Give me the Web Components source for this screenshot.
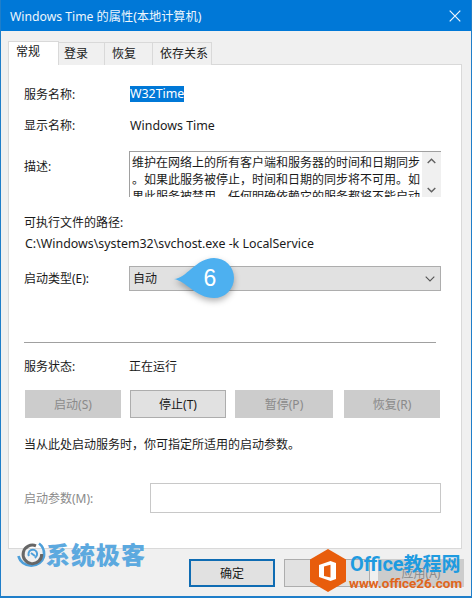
<!DOCTYPE html>
<html lang="zh">
<head>
<meta charset="utf-8">
<title>Windows Time 的属性</title>
<style>
  html, body { margin: 0; padding: 0; background: #f0f0f0; }
  body { font-family: "Noto Sans", "Noto Sans CJK SC", sans-serif; font-size: 12px; color: #1a1a1a; }
</style>
</head>
<body>
<win-dialog>
  <span slot="title">Windows Time 的属性(本地计算机)</span>
  <tab-strip slot="tabs"></tab-strip>
  <service-panel></service-panel>
  <dialog-footer slot="footer"></dialog-footer>
</win-dialog>

<script>
(function (customElements) {
  const FONT = '"Noto Sans", "Noto Sans CJK SC", sans-serif';
  const BRAND = 'Roboto, "Noto Sans CJK SC", sans-serif';

  class WinDialog extends HTMLElement {
    connectedCallback() {
      this.attachShadow({ mode: 'open' }).innerHTML = `
        <style>
          :host { display: flex; flex-direction: column; position: relative; width: 472px; height: 598px;
            box-sizing: border-box; background: #f0f0f0; border: solid #1f7ec9; border-width: 0 1px 2px 1px; overflow: hidden; }
          .bar { display: flex; align-items: center; justify-content: space-between; height: 31px; margin: 0 -1px; padding: 0 11px 0 10px;
            background: #0078d7; color: #eef6fc; font-size: 12.2px; flex: none; }
          svg { display: block; }
          .body { flex: 1; display: flex; flex-direction: column; padding: 10px 9px 0 7px; }
        </style>
        <div class="bar"><slot name="title"></slot>
          <svg width="12" height="12" viewBox="0 0 12 12"><path d="M.7.7l10.6 10.6M11.3.7L.7 11.3" stroke="#eef6fc" stroke-width="1.2" fill="none"/></svg>
        </div>
        <div class="body">
          <slot name="tabs"></slot>
          <slot></slot>
          <slot name="footer"></slot>
        </div>`;
    }
  }

  class TabStrip extends HTMLElement {
    connectedCallback() {
      const tabs = [['常规', 51, 7, true], ['登录', 46, 5], ['恢复', 48, 7], ['依存关系', 59, 7]];
      this.attachShadow({ mode: 'open' }).innerHTML = `
        <style>
          :host { display: flex; align-items: flex-end; height: 24px; position: relative; z-index: 1; margin-bottom: -1px; }
          div { box-sizing: border-box; height: 23px; line-height: 22px; background: #f0f0f0;
            border: 1px solid #d9d9d9; border-width: 1px 1px 0 0; font-size: 12px; color: #1a1a1a; }
          .on { height: 24px; line-height: 20px; background: #fff; border-left-width: 1px; }
        </style>
        ${tabs.map(([t, w, p, on]) => `<div class="${on ? 'on' : ''}" style="width:${w}px;padding-left:${p}px">${t}</div>`).join('')}`;
    }
  }

  class PropRow extends HTMLElement {
    connectedCallback() {
      this.attachShadow({ mode: 'open' }).innerHTML = `
        <style>
          :host { display: flex; align-items: center; min-height: 20px; line-height: 20px; }
          .l { flex: none; box-sizing: border-box; height: 20px; padding-top: var(--label-pad, 1px); width: var(--label-w, 105px); }
          .v { flex: 1; min-width: 0; }
        </style>
        <div class="l"><slot name="label"></slot></div>
        <div class="v"><slot></slot></div>`;
    }
  }

  class DescBox extends HTMLElement {
    connectedCallback() {
      this.attachShadow({ mode: 'open' }).innerHTML = `
        <style>
          :host { display: flex; height: 46px; box-sizing: border-box; border: solid #a0a0a0; border-width: 1px 0 0 1px; overflow: hidden; background: #fff; }
          .t { flex: 1; padding: 2px 0 0 2px; line-height: 17px; white-space: nowrap; overflow: hidden; }
          .s { flex: none; width: 19px; background: #f0f0f0; display: flex; flex-direction: column; justify-content: space-between; align-items: center; padding: 6px 0 4px; box-sizing: border-box; }
        </style>
        <div class="t"><slot></slot></div>
        <div class="s">
          <svg width="9" height="6" viewBox="0 0 9 6"><path d="M.7 5L4.500 1.200 8.300 5" stroke="#606060" stroke-width="1.4" fill="none"/></svg>
          <svg width="9" height="6" viewBox="0 0 9 6"><path d="M.7 1L4.500 4.800 8.300 1" stroke="#606060" stroke-width="1.4" fill="none"/></svg>
        </div>`;
    }
  }

  class WinSelect extends HTMLElement {
    connectedCallback() {
      this.attachShadow({ mode: 'open' }).innerHTML = `
        <style>
          :host { display: flex; align-items: center; justify-content: space-between; height: 25px; box-sizing: border-box; padding: 0 5px 0 3px;
            background: #e1e1e1; border: 1px solid #adadad; }
        </style>
        <span><slot></slot></span>
        <svg width="10" height="6" viewBox="0 0 10 6"><path d="M.7.7L5 5 9.300.7" stroke="#555" stroke-width="1.1" fill="none"/></svg>`;
    }
  }

  class WinButton extends HTMLElement {
    connectedCallback() {
      this.attachShadow({ mode: 'open' }).innerHTML = `
        <style>
          :host { display: flex; align-items: center; justify-content: center; box-sizing: border-box; height: var(--h, 28px);
            background: #e1e1e1; border: 1px solid #adadad; color: #1a1a1a; }
          :host([disabled]) { background: #cccccc; border-color: #cccccc; color: #8a8a8a; }
          :host([primary]) { border: 2px solid #0f6cb3; }
        </style>
        <slot></slot>`;
    }
  }

  class ServicePanel extends HTMLElement {
    connectedCallback() {
      this.attachShadow({ mode: 'open' }).innerHTML = `
        <style>
          :host { display: block; box-sizing: border-box; height: 485px; background: #fff; border: 1px solid #d9d9d9; padding: 0 20px 0 15px; flex: none; width: 454px; }
          .lat { font-size: 12.4px; margin-left: 1px; }
          .sel { background: #0078d7; color: #fff; display: inline-block; height: 16px; line-height: 16px; }
          .txt { display: block; box-sizing: border-box; height: 20px; padding-top: 1px; }
          hr { border: 0; height: 1px; background: #a0a0a0; margin: 51px 5px 0 0; }
          .btns { display: flex; margin: 14px 0 0 1px; }
          .gray { color: #8a8a8a; }
          .field { height: 30px; box-sizing: border-box; border: 1px solid #c8c8c8; }
          .mt11 { margin-top: 11px; } .mt16 { margin-top: 16px; } .mt15 { margin-top: 15px; }
          .mt1 { margin-top: 1px; } .mt13 { margin-top: 13px; } .mt30 { margin-top: 30px; }
          .top { margin-top: 19px; }
          .start { align-items: flex-start; }
          .start span[slot=label] { display: block; margin-top: 5px; }
          div.line { box-sizing: border-box; height: 20px; padding-top: 1px; line-height: 20px; }
          div.line.low { padding-top: 2px; }
        </style>
        <prop-row class="top"><span slot="label">服务名称:</span><span class="sel lat">W32Time</span></prop-row>
        <prop-row class="mt11"><span slot="label">显示名称:</span><span class="lat txt">Windows Time</span></prop-row>
        <prop-row class="mt16 start"><span slot="label">描述:</span><desc-box>维护在网络上的所有客户端和服务器的时间和日期同步<br>。如果此服务被停止，时间和日期的同步将不可用。如<br>果此服务被禁用，任何明确依赖它的服务都将不能启动</desc-box></prop-row>
        <div class="line mt15">可执行文件的路径:</div>
        <div class="line mt1 lat">C:\\Windows\\system32\\svchost.exe -k LocalService</div>
        <prop-row class="mt13" style="--label-pad:0"><span slot="label">启动类型(E):</span><win-select>自动</win-select></prop-row>
        <hr>
        <prop-row class="mt13"><span slot="label">服务状态:</span><span class="txt">正在运行</span></prop-row>
        <div class="btns">
          <win-button disabled style="width:96px">启动(S)</win-button>
          <win-button style="width:96px;margin-left:9px">停止(T)</win-button>
          <win-button disabled style="width:98px;margin-left:9px">暂停(P)</win-button>
          <win-button disabled style="width:96px;margin-left:11px">恢复(R)</win-button>
        </div>
        <div class="line low mt15">当从此处启动服务时，你可指定所适用的启动参数。</div>
        <prop-row class="mt30" style="--label-w:126px"><span slot="label" class="gray">启动参数(M):</span><div class="field"></div></prop-row>`;
    }
  }

  class DialogFooter extends HTMLElement {
    connectedCallback() {
      this.attachShadow({ mode: 'open' }).innerHTML = `
        <style>
          :host { display: flex; justify-content: flex-end; gap: 8px; margin: 10px -2px 0 0; --h: 28px; }
          win-button { width: 86px; }
          [primary] { margin-right: 1px; }
        </style>
        <win-button primary>确定</win-button>
        <win-button>取消</win-button>
        <win-button disabled>应用(A)</win-button>`;
    }
  }

  // 教程气泡，盖在下拉框上
  class StepCallout extends HTMLElement {
    connectedCallback() {
      this.attachShadow({ mode: 'open' }).innerHTML = `
        <style>
          :host { position: absolute; left: 170px; top: 255px; width: 70px; height: 50px; }
          svg { position: absolute; inset: 0; filter: drop-shadow(0 3px 3px rgba(0,0,0,.3)); }
          span { position: absolute; left: 28px; top: 6px; width: 22px; text-align: center; font: 23px/34px "Liberation Sans", sans-serif; color: #fff; }
        </style>
        <svg width="70" height="50" viewBox="0 0 70 50"><path d="M3 24C15 24 25 3 43 3a20 20 0 0 1 0 40C25 43 15 26 3 24z" fill="#4db0f0"/></svg>
        <span>6</span>`;
    }
  }

  class GeekMark extends HTMLElement {
    connectedCallback() {
      this.attachShadow({ mode: 'open' }).innerHTML = `
        <style>
          :host { position: absolute; left: 15px; top: 541px; display: flex; align-items: center; }
          span { font: 900 24px/28px ${FONT}; color: #5ca9df; letter-spacing: 1px; }
        </style>
        <svg width="30" height="28" viewBox="0 0 30 28">
          <path d="M2.500 15a13 12 0 0 0 25.500 0C28.500 9.500 26.500 5 23 2.500" stroke="#4d9fda" stroke-width="2.600" fill="none"/>
          <path d="M20 4.800A9.300 9.300 0 1 0 25.700 13" stroke="#666" stroke-width="3" fill="none"/>
          <path d="M13 15a4.300 4.300 0 1 1 5.800 1.800M15 12l4 3" stroke="#4d9fda" stroke-width="2" fill="none"/>
        </svg>
        <span>系统极客</span>`;
    }
  }

  class OfficeMark extends HTMLElement {
    connectedCallback() {
      this.attachShadow({ mode: 'open' }).innerHTML = `
        <style>
          :host { position: absolute; left: 308px; top: 548px; display: flex; gap: 3px; white-space: nowrap; }
          .t { display: flex; flex-direction: column; padding-top: 4px; }
          .a { font: 700 20px/24px ${BRAND}; color: #1e9be0; }
          .a b { font-size: 19px; font-weight: 700; }
          .b { font: 700 13.500px/12px ${BRAND}; color: #e0661c; margin-left: -1px; }
        </style>
        <svg width="38" height="45" viewBox="0 0 38 45">
          <path d="M19 1l18 10.500v22L19 44 1 33.500v-22z" fill="#e85d0c"/>
          <path d="M21.500 13L27 15V31L21.500 33 10 29V17zM15 18.500V28L21.500 29.500V16.800z" fill="#fff" fill-rule="evenodd"/>
        </svg>
        <div class="t"><span class="a">Office<b>教程网</b></span><span class="b">www.office26.com</span></div>`;
    }
  }

  customElements.define('win-dialog', WinDialog);
  customElements.define('tab-strip', TabStrip);
  customElements.define('prop-row', PropRow);
  customElements.define('desc-box', DescBox);
  customElements.define('win-select', WinSelect);
  customElements.define('win-button', WinButton);
  customElements.define('service-panel', ServicePanel);
  customElements.define('dialog-footer', DialogFooter);
  customElements.define('step-callout', StepCallout);
  customElements.define('geek-mark', GeekMark);
  customElements.define('office-mark', OfficeMark);

  const dlg = document.querySelector('win-dialog');
  ['step-callout', 'geek-mark', 'office-mark'].forEach((n) => dlg.appendChild(document.createElement(n)));
})(window.customElements);
</script>
</body>
</html>
